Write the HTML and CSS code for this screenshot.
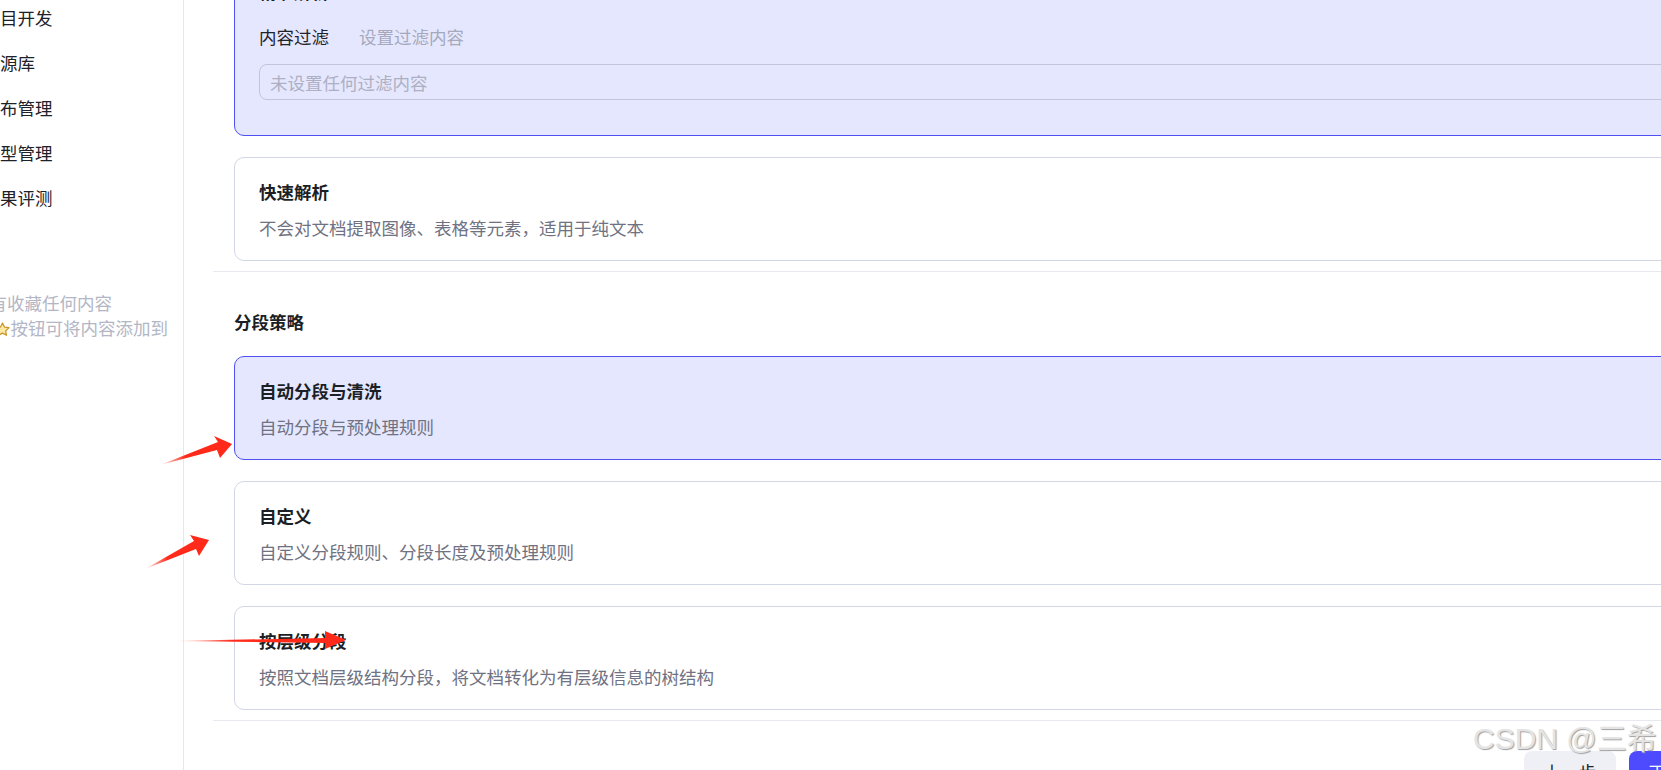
FILE: index.html
```html
<!DOCTYPE html>
<html lang="zh-CN">
<head>
    <meta charset="UTF-8">
    <meta name="viewport" content="width=device-width, initial-scale=1.0">
    <title>创建知识库</title>
    <link rel="stylesheet" href="styles.css">
</head>
<body>
    <div class="page">
        <aside class="sidebar">
            <ul class="nav">
                <li class="nav-item">项目开发</li>
                <li class="nav-item">资源库</li>
                <li class="nav-item">发布管理</li>
                <li class="nav-item">模型管理</li>
                <li class="nav-item">效果评测</li>
            </ul>
            <div class="tip">
                <div>还没有收藏任何内容</div>
                <div>点击<svg class="star" viewBox="0 0 24 24"><path d="M12 2.8l2.8 5.8 6.3.9-4.6 4.4 1.1 6.3L12 17.2l-5.6 3 1.1-6.3-4.6-4.4 6.3-.9z"/></svg>按钮可将内容添加到</div>
            </div>
        </aside>

        <main class="main">
            <section class="section section-parse">
                <div class="card active card-filter">
                    <div class="card-title">精准解析</div>
                    <div class="filter-row">
                        <span class="filter-label">内容过滤</span>
                        <span class="filter-hint">设置过滤内容</span>
                    </div>
                    <div class="filter-input">未设置任何过滤内容</div>
                </div>
                <div class="card">
                    <div class="card-title">快速解析</div>
                    <div class="card-desc">不会对文档提取图像、表格等元素，适用于纯文本</div>
                </div>
            </section>

            <section class="section">
                <h3 class="section-title">分段策略</h3>
                <div class="card active">
                    <div class="card-title">自动分段与清洗</div>
                    <div class="card-desc">自动分段与预处理规则</div>
                </div>
                <div class="card">
                    <div class="card-title">自定义</div>
                    <div class="card-desc">自定义分段规则、分段长度及预处理规则</div>
                </div>
                <div class="card">
                    <div class="card-title">按层级分段</div>
                    <div class="card-desc">按照文档层级结构分段，将文档转化为有层级信息的树结构</div>
                </div>
            </section>

            <div class="footer">
                <button class="btn btn-prev">上一步</button>
                <button class="btn btn-next">下一步</button>
            </div>
        </main>

        <svg class="arrows" width="400" height="770" viewBox="0 0 400 770">
            <defs>
                <linearGradient id="fade" x1="0" x2="1" y1="0" y2="0">
                    <stop offset="0" stop-color="#ff2a1a" stop-opacity="0"/>
                    <stop offset="0.35" stop-color="#ff2a1a"/>
                </linearGradient>
            </defs>
            <polygon points="160,465 218,442 214,436 232,444 220,458 217,450" fill="url(#fade)"/>
            <polygon points="145,569 194,541 190,535 209,540 199,556 196,549" fill="url(#fade)"/>
            <polygon points="172,641 325,638 325,631 346,640 325,649 325,643" fill="url(#fade)"/>
        </svg>

        <div class="watermark">CSDN @三希</div>
    </div>
</body>
</html>
```

FILE: styles.css
```css
body {
    margin: 0;
    overflow: hidden;
    background: #fff;
    font-family: "Noto Sans CJK SC", "Noto Sans", sans-serif;
    color: #1f2329;
}

.page {
    position: relative;
    display: flex;
    width: 1745px;
    height: 770px;
    overflow: hidden;
}

/* sidebar, scrolled so the icons are out of view */
.sidebar {
    width: 183px;
    flex-shrink: 0;
    border-right: 1px solid #e6e7ec;
    overflow: hidden;
}

.nav {
    list-style: none;
    margin: -5px 0 0 -17.5px;
    padding: 0;
}

.nav-item {
    height: 45px;
    display: flex;
    align-items: center;
    font-size: 17.5px;
    white-space: nowrap;
    color: #1d2129;
}

.tip {
    margin: 70px 0 0 -45.5px;
    font-size: 17.5px;
    line-height: 25px;
    color: #b3b6c5;
    white-space: nowrap;
}

.star {
    width: 17px;
    height: 17px;
    margin: 0 0 -3px 4px;
    fill: #fde9a6;
    stroke: #c9962c;
    stroke-width: 1.8;
    stroke-linejoin: round;
}

/* main column */
.main {
    flex: 1;
    padding: 0 24px 0 29px;
}

.section {
    padding: 37px 0 10px 21px;
    border-bottom: 1px solid #e8e9ef;
}

.section-parse {
    margin-top: -43px;
    padding-top: 0;
}

.section-title {
    margin: 0 0 21px;
    font-size: 17.5px;
    line-height: 26px;
    font-weight: 600;
    color: #1c1f26;
}

.card {
    padding: 21px 24px 19px;
    border: 1px solid #d3d6e4;
    border-radius: 10px;
    background: #fff;
}

.card + .card {
    margin-top: 21px;
}

.card.active {
    border-color: #5050f2;
    background: #e5e7fe;
}

.card-title {
    font-size: 17.5px;
    line-height: 26px;
    font-weight: 600;
    color: #1c1f26;
}

.card-desc {
    margin-top: 10px;
    font-size: 17.5px;
    line-height: 26px;
    color: #6f7282;
}

.card-filter {
    padding-bottom: 35px;
}

.filter-row {
    display: flex;
    gap: 30px;
    margin-top: 19px;
    font-size: 17.5px;
    line-height: 26px;
}

.filter-label {
    color: #1f2329;
}

.filter-hint {
    color: #a6a9bc;
}

.filter-input {
    display: flex;
    align-items: center;
    height: 34px;
    margin-top: 14px;
    padding: 0 10px;
    border: 1px solid #c1c5dc;
    border-radius: 8px;
    font-size: 17.5px;
    color: #adb0c2;
}

.footer {
    display: flex;
    justify-content: flex-end;
    gap: 13px;
    margin-top: 30px;
}

.btn {
    width: 92px;
    height: 40px;
    border: none;
    border-radius: 8px;
    font-family: inherit;
    font-size: 17.5px;
}

.btn-prev {
    background: #eef0f6;
    color: #1f2329;
}

.btn-next {
    background: #4e4bff;
    color: #fff;
}

.arrows {
    position: absolute;
    left: 0;
    top: 0;
    pointer-events: none;
}

.watermark {
    position: absolute;
    left: 1473px;
    top: 721px;
    font-family: "Liberation Sans", "Noto Sans CJK SC", sans-serif;
    font-size: 30px;
    line-height: 36px;
    white-space: nowrap;
    color: #e4e4e4;
    text-shadow: 1px 1px 1px #a0a0a0;
}
```
